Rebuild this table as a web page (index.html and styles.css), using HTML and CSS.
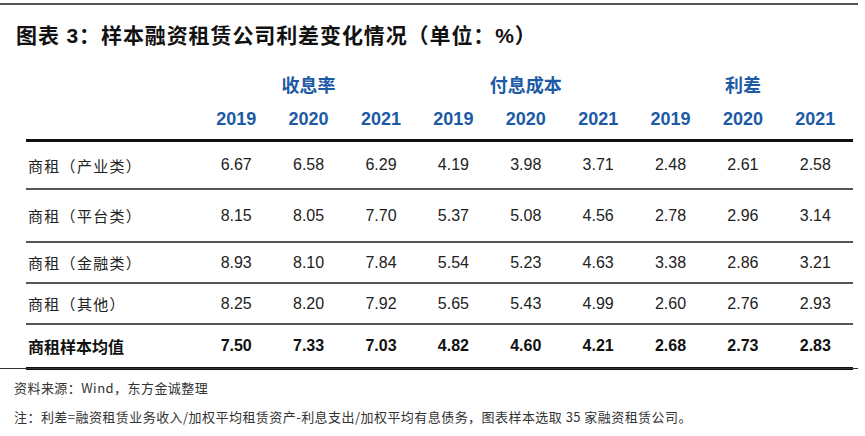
FILE: index.html
```html
<!DOCTYPE html>
<html lang="zh-CN">
<head>
<meta charset="utf-8">
<link rel="stylesheet" href="styles.css">
</head>
<body>
<div class="page">
  <div class="topline"></div>
  <h1 class="title">图表 3：样本融资租赁公司利差变化情况（单位：%）</h1>
  <div class="table">
    <div class="row group-row">
      <div></div>
      <div class="group">收息率</div>
      <div class="group">付息成本</div>
      <div class="group">利差</div>
    </div>
    <div class="row year-row">
      <div></div>
      <div>2019</div><div>2020</div><div>2021</div>
      <div>2019</div><div>2020</div><div>2021</div>
      <div>2019</div><div>2020</div><div>2021</div>
    </div>
    <div class="row data r1">
      <div class="label">商租（产业类）</div>
      <div>6.67</div><div>6.58</div><div>6.29</div>
      <div>4.19</div><div>3.98</div><div>3.71</div>
      <div>2.48</div><div>2.61</div><div>2.58</div>
    </div>
    <div class="row data r2">
      <div class="label">商租（平台类）</div>
      <div>8.15</div><div>8.05</div><div>7.70</div>
      <div>5.37</div><div>5.08</div><div>4.56</div>
      <div>2.78</div><div>2.96</div><div>3.14</div>
    </div>
    <div class="row data r3">
      <div class="label">商租（金融类）</div>
      <div>8.93</div><div>8.10</div><div>7.84</div>
      <div>5.54</div><div>5.23</div><div>4.63</div>
      <div>3.38</div><div>2.86</div><div>3.21</div>
    </div>
    <div class="row data r4">
      <div class="label">商租（其他）</div>
      <div>8.25</div><div>8.20</div><div>7.92</div>
      <div>5.65</div><div>5.43</div><div>4.99</div>
      <div>2.60</div><div>2.76</div><div>2.93</div>
    </div>
    <div class="row data total">
      <div class="label">商租样本均值</div>
      <div>7.50</div><div>7.33</div><div>7.03</div>
      <div>4.82</div><div>4.60</div><div>4.21</div>
      <div>2.68</div><div>2.73</div><div>2.83</div>
    </div>
  </div>
  <div class="bottomrule"></div>
  <p class="note">资料来源：Wind，东方金诚整理</p>
  <p class="note">注：利差=融资租赁业务收入/加权平均租赁资产-利息支出/加权平均有息债务，图表样本选取 35 家融资租赁公司。</p>
</div>
</body>
</html>
```

FILE: styles.css
```css
* { box-sizing: border-box; }
html, body { margin: 0; padding: 0; background: #fff; }
body {
  font-family: "Liberation Sans", "Noto Sans CJK SC", sans-serif;
  color: #222;
}
.page { width: 865px; height: 436px; overflow: hidden; }
.topline {
  margin-top: 3px;
  width: 858px;
  height: 2px;
  background: #555;
}
.title {
  margin: 16px 0 0 16px;
  height: 30px;
  line-height: 30px;
  font-size: 21px;
  font-weight: bold;
  color: #111;
  font-family: "Liberation Sans", "Noto Sans CJK SC", sans-serif;
  letter-spacing: 0.9px;
}
.table {
  margin: 15px 0 0 26px;
  width: 827px;
}
.row {
  display: grid;
  grid-template-columns: 174px repeat(9, 72.4px);
  align-items: center;
}
.row > div { text-align: center; }
.group-row {
  grid-template-columns: 174px repeat(3, 217.2px);
  height: 36px;
}
.group {
  color: #1c5aa6;
  font-weight: bold;
  font-size: 18px;
  font-family: "Noto Sans CJK SC", sans-serif;
}
.year-row {
  height: 40px;
  border-bottom: 3px solid #111;
  color: #1c5aa6;
  font-weight: bold;
  font-size: 18px;
  padding-bottom: 3px;
}
.data {
  font-size: 16px;
  border-bottom: 2px solid #555;
  color: #222;
}
.data .label {
  text-align: left;
  padding-left: 2px;
  font-size: 15px;
  letter-spacing: 1.3px;
  font-family: "Noto Sans CJK SC", sans-serif;
}
.r1 { height: 48px; }
.r2 { height: 53px; }
.r3 { height: 41px; }
.r4 { height: 41px; }
.total {
  height: 45px;
  border-bottom: 3px solid #111;
  font-weight: bold;
  color: #111;
}
.total .label { font-size: 16px; font-weight: bold; letter-spacing: 0; }
.bottomrule {
  margin-top: -2px;
  width: 858px;
  height: 1px;
  background: #333;
}
.note {
  margin: 9px 0 0 14px;
  height: 20px;
  line-height: 20px;
  font-size: 13px;
  letter-spacing: 0.45px;
  color: #333;
  font-family: "Noto Sans CJK SC", sans-serif;
}
.note + .note { margin-top: 9px; }
```
